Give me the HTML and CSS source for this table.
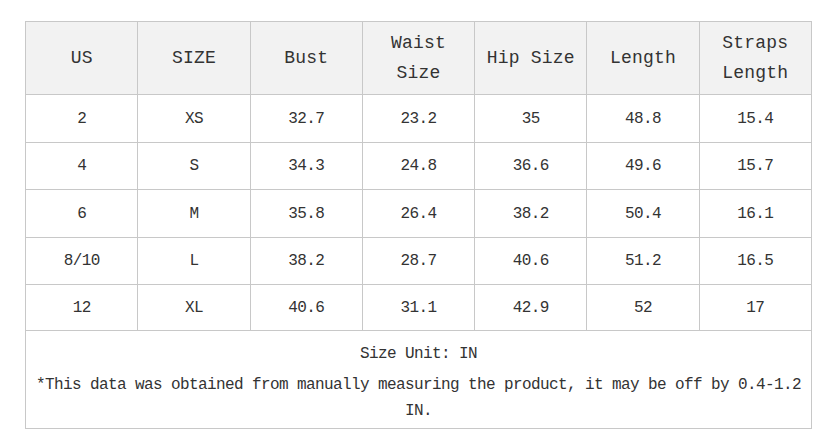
FILE: index.html
```html
<!DOCTYPE html>
<html>
<head>
<meta charset="utf-8">
<link rel="stylesheet" href="styles.css">
</head>
<body>
<div class="wrap">
<table class="size-table">
  <thead>
    <tr>
      <th>US</th><th>SIZE</th><th>Bust</th><th>Waist Size</th><th>Hip Size</th><th>Length</th><th>Straps Length</th>
    </tr>
  </thead>
  <tbody>
    <tr class="tall"><td>2</td><td>XS</td><td>32.7</td><td>23.2</td><td>35</td><td>48.8</td><td>15.4</td></tr>
    <tr><td>4</td><td>S</td><td>34.3</td><td>24.8</td><td>36.6</td><td>49.6</td><td>15.7</td></tr>
    <tr class="tall"><td>6</td><td>M</td><td>35.8</td><td>26.4</td><td>38.2</td><td>50.4</td><td>16.1</td></tr>
    <tr><td>8/10</td><td>L</td><td>38.2</td><td>28.7</td><td>40.6</td><td>51.2</td><td>16.5</td></tr>
    <tr class="short"><td>12</td><td>XL</td><td>40.6</td><td>31.1</td><td>42.9</td><td>52</td><td>17</td></tr>
    <tr class="foot">
      <td colspan="7">
        <div class="unit">Size Unit: IN</div>
        <div class="note">*This data was obtained from manually measuring the product, it may be off by 0.4-1.2 IN.</div>
      </td>
    </tr>
  </tbody>
</table>
</div>
</body>
</html>
```
FILE: styles.css
```css
html, body {
  margin: 0;
  padding: 0;
  background: #ffffff;
}
.wrap {
  padding: 21px 10px 0 25px;
}
.size-table {
  width: 787px;
  border-collapse: collapse;
  table-layout: fixed;
  font-family: "Liberation Mono", "DejaVu Sans Mono", monospace;
  color: #333333;
}
.size-table th,
.size-table td {
  border: 1px solid #c8c8c8;
  text-align: center;
  vertical-align: middle;
  padding: 0 8px;
}
.size-table th {
  background: #f2f2f2;
  font-weight: normal;
  font-size: 18px;
  letter-spacing: 0.2px;
  line-height: 30px;
  height: 72px;
  color: #333333;
}
.size-table td {
  font-size: 16px;
  letter-spacing: -0.6px;
  height: 46px;
}
.size-table .tall td {
  height: 47px;
}
.size-table .short td {
  height: 45px;
}
.size-table .foot td {
  height: auto;
  padding: 8px 6px 4px;
}
.unit {
  line-height: 30px;
}
.note {
  margin-top: 3px;
  line-height: 26px;
}
```
